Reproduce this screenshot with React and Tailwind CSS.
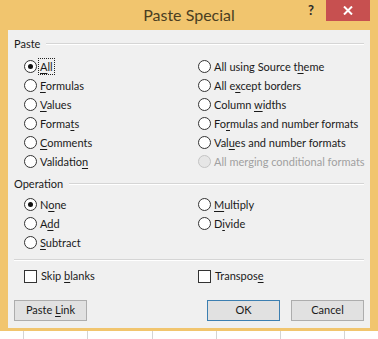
import React from 'react'

const FONT = { fontFamily: 'Lato, "Liberation Sans", sans-serif' }

function Key({ children }) {
  return <span className="underline decoration-1 underline-offset-2">{children}</span>
}

function Radio({ checked, disabled, focus, children }) {
  return (
    <div className="flex items-center h-[19px] whitespace-nowrap">
      <span
        className={
          'w-[13px] h-[13px] rounded-full border flex items-center justify-center shrink-0 ' +
          (disabled ? 'border-[#c4c4c4] bg-[#e6e6e6]' : 'border-[#333] bg-white')
        }
      >
        {checked && <span className="w-[5px] h-[5px] rounded-full bg-[#111]" />}
      </span>
      <span
        className={
          'ml-[2px] px-px leading-[15px] ' +
          (focus ? 'outline outline-1 outline-dotted outline-[#222] ' : '') +
          (disabled ? 'text-[#a0a0a0]' : 'text-[#1a1a1a]')
        }
      >
        {children}
      </span>
    </div>
  )
}

function Check({ children }) {
  return (
    <div className="flex items-center h-[19px] whitespace-nowrap">
      <span className="w-[13px] h-[13px] border border-[#333] bg-white shrink-0" />
      <span className="ml-[4px] text-[#1a1a1a]">{children}</span>
    </div>
  )
}

function GroupHead({ label }) {
  return (
    <div className="flex items-center h-[14px] pl-[6px] pr-[6px]">
      <span className="text-[#1a1a1a]">{label}</span>
      <div className="flex-1 ml-[6px] border-t border-[#d5d5d5] border-b-white border-b" />
    </div>
  )
}

function Btn({ primary, children }) {
  return (
    <button
      className={
        'w-[73px] h-[21px] bg-[#e1e1e1] border text-[#1a1a1a] ' +
        (primary ? 'border-[#3c7fb1]' : 'border-[#adadad]')
      }
    >
      {children}
    </button>
  )
}

export default function App() {
  return (
    <div className="w-[378px] h-[339px] bg-[#f1c56e] flex flex-col overflow-hidden text-[11px]" style={FONT}>
      {/* Title bar */}
      <div className="h-[30px] flex items-start relative">
        <div className="flex-1 text-center text-[16px] text-[#4a3e22] pt-[3px]">Paste Special</div>
        <div className="absolute right-[8px] top-0 flex items-start">
          <span className="w-[30px] h-[21px] flex items-center justify-center text-[13px] font-bold text-[#2a2a2a]">?</span>
          <span className="w-[44px] h-[21px] bg-[#c75050] flex items-center justify-center">
            <svg width="10" height="9" viewBox="0 0 10 9">
              <path d="M1 0.5 L9 8.5 M9 0.5 L1 8.5" stroke="#fff" strokeWidth="2" />
            </svg>
          </span>
        </div>
      </div>

      {/* Body */}
      <div className="mx-[8px] h-[298px] bg-[#f0f0f0] flex flex-col">
        <div className="h-[7px]" />
        <GroupHead label="Paste" />
        <div className="h-[6px]" />
        <div className="grid grid-cols-[174px_1fr] pl-[16px]">
          <div className="flex flex-col">
            <Radio checked focus><Key>A</Key>ll</Radio>
            <Radio><Key>F</Key>ormulas</Radio>
            <Radio><Key>V</Key>alues</Radio>
            <Radio>Forma<Key>t</Key>s</Radio>
            <Radio><Key>C</Key>omments</Radio>
            <Radio>Validatio<Key>n</Key></Radio>
          </div>
          <div className="flex flex-col">
            <Radio>All using Source t<Key>h</Key>eme</Radio>
            <Radio>All e<Key>x</Key>cept borders</Radio>
            <Radio>Column <Key>w</Key>idths</Radio>
            <Radio>Fo<Key>r</Key>mulas and number formats</Radio>
            <Radio>Val<Key>u</Key>es and number formats</Radio>
            <Radio disabled>All merging conditional formats</Radio>
          </div>
        </div>
        <div className="h-[6px]" />
        <GroupHead label="Operation" />
        <div className="h-[4px]" />
        <div className="grid grid-cols-[174px_1fr] pl-[16px]">
          <div className="flex flex-col">
            <Radio checked>N<Key>o</Key>ne</Radio>
            <Radio>A<Key>d</Key>d</Radio>
            <Radio><Key>S</Key>ubtract</Radio>
          </div>
          <div className="flex flex-col">
            <Radio><Key>M</Key>ultiply</Radio>
            <Radio>D<Key>i</Key>vide</Radio>
          </div>
        </div>
        <div className="mx-[6px] mt-[7px] border-t border-[#d5d5d5] border-b border-b-white" />
        <div className="h-[6px]" />
        <div className="grid grid-cols-[174px_1fr] pl-[16px]">
          <Check>Skip <Key>b</Key>lanks</Check>
          <Check>Transpos<Key>e</Key></Check>
        </div>
        <div className="h-[14px]" />
        <div className="flex px-[6px]">
          <Btn>Paste <Key>L</Key>ink</Btn>
          <div className="flex-1" />
          <Btn primary>OK</Btn>
          <div className="w-[11px]" />
          <Btn>Cancel</Btn>
        </div>
      </div>

      <div className="h-[3px]" />
      {/* Sheet strip behind the dialog */}
      <div className="flex-1 bg-white flex">
        <div className="w-[24px] border-r border-[#d4d4d4]" />
        <div className="w-[64px] border-r border-[#d4d4d4]" />
        <div className="w-[65px] border-r border-[#d4d4d4]" />
        <div className="w-[64px] border-r border-[#d4d4d4]" />
        <div className="w-[64px] border-r border-[#d4d4d4]" />
        <div className="w-[64px] border-r border-[#d4d4d4]" />
        <div className="flex-1" />
      </div>
    </div>
  )
}
